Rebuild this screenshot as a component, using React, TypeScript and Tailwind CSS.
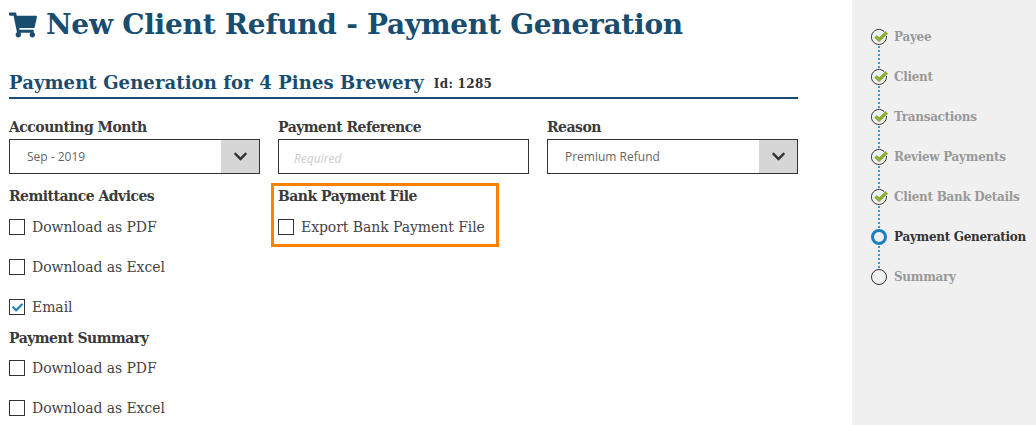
import { FaShoppingCart, FaChevronDown, FaCheck } from "react-icons/fa";

const slab = "font-['DejaVu_Serif',serif]";

function Label({ children }: { children: React.ReactNode }) {
  return <div className={`${slab} h-5 text-[14px] leading-5 font-bold tracking-[-0.52px] text-[#3a3a3a]`}>{children}</div>;
}

function Select({ value }: { value: string }) {
  return (
    <div className="flex h-[35px] items-stretch border border-[#333] bg-white">
      <div className="flex flex-1 items-center pl-[17px] font-['Open_Sans',sans-serif] text-[12px] text-[#666]">{value}</div>
      <div className="flex w-[38px] items-center justify-center bg-[#d6d6d6] text-[#333]">
        <FaChevronDown size={15} />
      </div>
    </div>
  );
}

function Check({ label, checked }: { label: string; checked?: boolean }) {
  return (
    <div className="flex h-10 items-center gap-[7px]">
      <div className="flex h-4 w-4 items-center justify-center border border-[#333] bg-white text-[#1b80c0]">
        {checked && <FaCheck size={11} />}
      </div>
      <span className={`${slab} text-[14px] tracking-[-0.07px] text-[#444]`}>{label}</span>
    </div>
  );
}

function Done() {
  return (
    <svg width="20" height="18" viewBox="0 0 20 18" className="block">
      <path d="M13.3 3.7A7.5 7.5 0 1 0 15.4 8" fill="none" stroke="#333" strokeWidth="1" />
      <path d="M4.5 8.2l3.6 3.6 7.7-7.4" fill="none" stroke="#8fad3c" strokeWidth="3.6" />
    </svg>
  );
}

const steps = ["Payee", "Client", "Transactions", "Review Payments", "Client Bank Details", "Payment Generation", "Summary"];

function Step({ label, index }: { label: string; index: number }) {
  const active = index === 5;
  const last = index === steps.length - 1;
  return (
    <div className="relative flex h-10 items-center">
      {!last && (
        <div className="absolute left-[7px] top-[29px] h-[22px] border-l-2 border-dotted border-[#3b98d8]" />
      )}
      <div className="flex w-[23px] items-center">
        {index < 5 ? (
          <Done />
        ) : active ? (
          <div className="h-4 w-4 rounded-full border-[3px] border-[#1b80c0]" />
        ) : (
          <div className="h-4 w-4 rounded-full border border-[#333]" />
        )}
      </div>
      <span className={`${slab} text-[12px] font-bold tracking-[-0.3px] ${active ? "text-[#333]" : "text-[#999]"}`}>{label}</span>
    </div>
  );
}

export default function App() {
  return (
    <div className="flex h-[425px] w-[1036px] overflow-hidden bg-white">
      <main className="w-[852px] pl-[9px] pr-[54px]">
        <h1 className={`${slab} flex h-[50px] items-center gap-[9px] text-[28px] font-bold tracking-[-0.26px] text-[#194d70]`}>
          <FaShoppingCart size={28} />
          <span>New Client Refund - Payment Generation</span>
        </h1>
        <div className="mt-[18px] flex h-[31px] items-center gap-[10px] border-b-2 border-[#194d70] pt-[2px] pb-[2px]">
          <h2 className={`${slab} text-[18px] font-bold tracking-[0.1px] text-[#194d70]`}>Payment Generation for 4 Pines Brewery</h2>
          <span className={`${slab} mt-[3px] text-[12px] font-bold tracking-[0.3px] text-[#333]`}>Id: 1285</span>
        </div>
        <div className="mt-[18px] grid grid-cols-3 gap-x-[18px]">
          <div>
            <Label>Accounting Month</Label>
            <div className="mt-[2px]"><Select value="Sep - 2019" /></div>
          </div>
          <div>
            <Label>Payment Reference</Label>
            <div className="mt-[2px] flex h-[35px] items-center border border-[#333] bg-white pl-[15px] pt-[5px] font-['Open_Sans',sans-serif] text-[12px] italic text-[#ccc]">Required</div>
          </div>
          <div>
            <Label>Reason</Label>
            <div className="mt-[2px]"><Select value="Premium Refund" /></div>
          </div>
        </div>
        <div className="mt-[12px] grid grid-cols-3 gap-x-[18px]">
          <div>
            <Label>Remittance Advices</Label>
            <div className="mt-[1px]">
              <Check label="Download as PDF" />
              <Check label="Download as Excel" />
              <Check label="Email" checked />
            </div>
            <div className="mt-[1px]"><Label>Payment Summary</Label></div>
            <div>
              <Check label="Download as PDF" />
              <Check label="Download as Excel" />
            </div>
          </div>
          <div className="-ml-[7px] -mt-[3px] h-[64px] w-[228px] border-[3px] border-[#fb8200] pl-[4px]">
            <Label>Bank Payment File</Label>
            <div className="mt-[1px]"><Check label="Export Bank Payment File" /></div>
          </div>
        </div>
      </main>
      <aside className="flex-1 bg-[#f0f0f0] pl-[19px] pt-[17px]">
        {steps.map((s, i) => (
          <Step key={s} label={s} index={i} />
        ))}
      </aside>
    </div>
  );
}
